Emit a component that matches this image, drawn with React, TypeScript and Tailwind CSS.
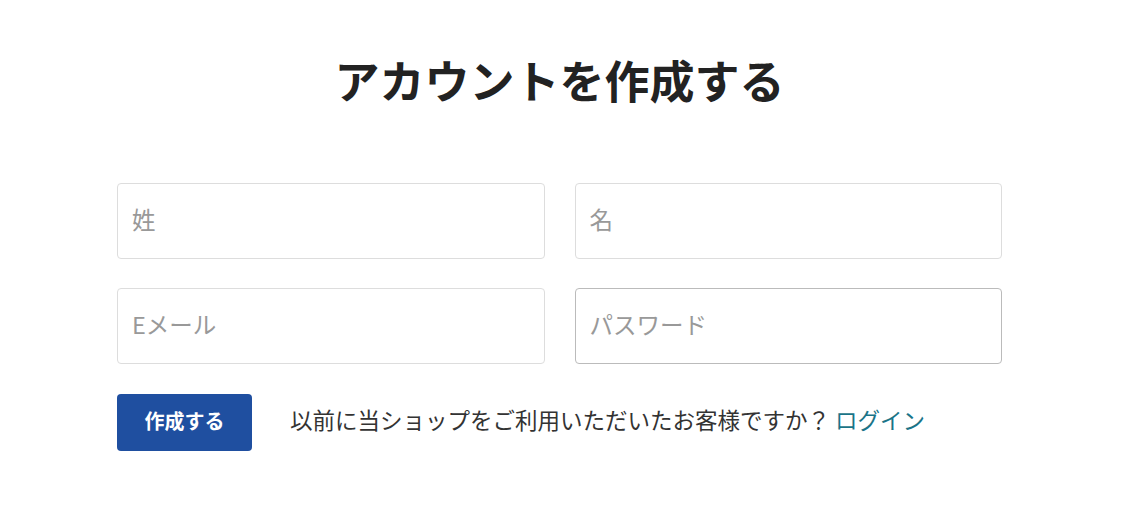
import { useState } from 'react';

const font = { fontFamily: '"Noto Sans CJK JP", "Noto Sans", sans-serif' };

const Field = ({ placeholder, type = 'text', dark = false }: { placeholder: string; type?: string; dark?: boolean }) => (
  <input
    type={type}
    placeholder={placeholder}
    className={`h-[76px] w-full rounded-[4px] border bg-white px-[14px] pb-[5px] text-[23.5px] text-[#333] outline-none placeholder:text-[#999] ${
      dark ? 'border-[#bbb]' : 'border-[#ddd]'
    }`}
  />
);

export default function App() {
  const [submitted, setSubmitted] = useState(false);

  return (
    <div className="min-h-[516px] bg-white text-[#222]" style={font}>
      <div className="ml-[117px] w-[885px] pt-[53px]">
        <h1 className="text-center text-[45px] font-bold leading-[54px] text-[#222]">アカウントを作成する</h1>

        <form
          className="mt-[76px]"
          onSubmit={(e) => {
            e.preventDefault();
            setSubmitted(!submitted);
          }}
        >
          <div className="grid grid-cols-2 gap-x-[30px] gap-y-[29px]">
            <Field placeholder="姓" />
            <Field placeholder="名" />
            <Field placeholder="Eメール" type="email" />
            <Field placeholder="パスワード" type="password" dark />
          </div>

          <div className="mt-[30px] flex items-center gap-[38px]">
            <button
              type="submit"
              className="h-[57px] w-[135px] rounded-[4px] bg-[#1f4fa0] pb-[3px] text-[20px] font-bold text-white"
            >
              作成する
            </button>
            <p className="pb-[6px] text-[22.5px] text-[#333]">
              以前に当ショップをご利用いただいたお客様ですか？ <a href="#" className="text-[#1a7488]">ログイン</a>
            </p>
          </div>
        </form>
      </div>
    </div>
  );
}
